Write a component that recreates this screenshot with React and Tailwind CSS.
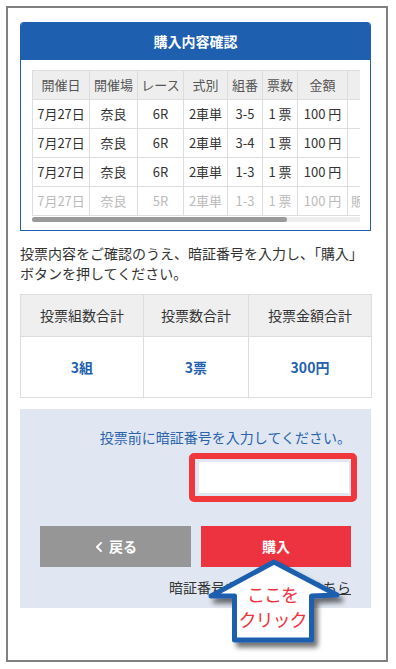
import React from "react";
import { FaChevronLeft } from "react-icons/fa";

const rows = [
  ["7月27日", "奈良", "6R", "2車単", "3-5", "1 票", "100 円", ""],
  ["7月27日", "奈良", "6R", "2車単", "3-4", "1 票", "100 円", ""],
  ["7月27日", "奈良", "6R", "2車単", "1-3", "1 票", "100 円", ""],
  ["7月27日", "奈良", "5R", "2車単", "1-3", "1 票", "100 円", "販売終了"],
];
const heads = ["開催日", "開催場", "レース", "式別", "組番", "票数", "金額", "状態"];
const widths = [57, 48, 46, 44, 35, 35, 50, 62];

export default function App() {
  return (
    <div className="relative w-[396px] h-[669px] bg-white font-['Noto_Sans_CJK_JP',sans-serif] overflow-hidden">
      <div className="ml-[6px] mt-[6px] w-[382px] h-[656px] border-2 border-[#808080] pl-[12px] pr-[15px] pt-[14px]">
        {/* card */}
        <div className="w-[351px] rounded-t-[4px] overflow-hidden border-b border-x border-[#1E5FAF]">
          <div className="h-[38px] -mx-px bg-[#1E5FAF] flex items-center justify-center text-white font-bold text-[14px]">
            購入内容確認
          </div>
          <div className="pl-[11px] pr-[10px] pt-[10px] pb-[8px]">
            <div className="w-[328px] overflow-hidden">
              <table className="border-collapse table-fixed text-[13px]" style={{ width: 377 }}>
                <colgroup>
                  {widths.map((w, i) => (
                    <col key={i} style={{ width: w }} />
                  ))}
                </colgroup>
                <thead>
                  <tr className="h-[29px] bg-[#eeeeee]">
                    {heads.map((h, i) => (
                      <th key={i} className="border border-[#dddddd] font-normal text-[#555] text-center p-0 whitespace-nowrap">
                        {i < 7 ? h : ""}
                      </th>
                    ))}
                  </tr>
                </thead>
                <tbody>
                  {rows.map((r, ri) => (
                    <tr key={ri} className={"h-[29px] " + (ri === 3 ? "text-[#bbbbbb]" : "text-[#333]")}>
                      {r.map((c, ci) => (
                        <td key={ci} className={"border border-[#dddddd] p-0 whitespace-nowrap " + (ci === 7 ? "text-left pl-[3px]" : "text-center")}>
                          {c}
                        </td>
                      ))}
                    </tr>
                  ))}
                </tbody>
              </table>
              <div className="mt-[1px] h-[5px] w-[328px] bg-[#eeeeee]">
                <div className="h-[5px] w-[255px] bg-[#9a9a9a] rounded-full" />
              </div>
            </div>
          </div>
        </div>

        <p className="mt-[12px] text-[14px] leading-[20px] text-[#333] w-[351px]">
          投票内容をご確認のうえ、暗証番号を入力し、「購入」ボタンを押してください。
        </p>

        <table className="mt-[11px] w-[351px] border-collapse table-fixed text-[14px]">
          <colgroup>
            <col style={{ width: 123 }} />
            <col style={{ width: 105 }} />
            <col style={{ width: 123 }} />
          </colgroup>
          <thead>
            <tr className="h-[42px] bg-[#efefef]">
              {["投票組数合計", "投票数合計", "投票金額合計"].map((h) => (
                <th key={h} className="border border-[#dddddd] font-normal text-[#333] text-center p-0">
                  {h}
                </th>
              ))}
            </tr>
          </thead>
          <tbody>
            <tr className="h-[61px]">
              {["3組", "3票", "300円"].map((v) => (
                <td key={v} className="border border-[#dddddd] font-bold text-[#2461AE] text-center p-0">
                  {v}
                </td>
              ))}
            </tr>
          </tbody>
        </table>

        <div className="mt-[11px] w-[351px] bg-[#E0E7F2] px-[20px] pt-[18px] pb-[11px]">
          <p className="text-right text-[14px] leading-[21px] text-[#2A63AC]">投票前に暗証番号を入力してください。</p>
          <div className="mt-[14px] flex justify-end">
            <div className="relative w-[150px] h-[31px] bg-white mr-[2px]">
              <div className="absolute top-[-9px] bottom-[-9px] left-[-10px] right-[-8px] border-[6px] border-[#F0373B] rounded-[5px]" />
            </div>
          </div>
          <div className="mt-[33px] flex gap-[10px]">
            <div className="w-[151px] h-[41px] bg-[#969696] flex items-center justify-center gap-[5px] text-white font-bold text-[14px]">
              <FaChevronLeft className="w-[10px] h-[12px]" />
              <span>戻る</span>
            </div>
            <div className="w-[150px] h-[41px] bg-[#EE3340] flex items-center justify-center text-white font-bold text-[14px]">
              購入
            </div>
          </div>
          <p className="mt-[10px] text-right text-[14px] leading-[20px] text-[#333]">
            暗証番号を忘れた方は<span className="underline">こちら</span>
          </p>
        </div>
      </div>

      {/* annotation arrow */}
      <svg className="absolute left-[200px] top-[552px]" width="160" height="110" viewBox="200 552 160 110">
        <defs>
          <filter id="sh" x="-20%" y="-20%" width="150%" height="150%">
            <feDropShadow dx="4" dy="5" stdDeviation="2.5" floodColor="#000" floodOpacity="0.55" />
          </filter>
        </defs>
        <path
          d="M274,562 L337,595 L311.5,596 L311.5,640 L234.5,640 L234.5,596 L211,596 Z"
          fill="#fff"
          stroke="#1E5FAF"
          strokeWidth="5"
          strokeLinejoin="round"
          filter="url(#sh)"
        />
      </svg>
      <div className="absolute left-[234px] top-[582px] w-[77px] text-center text-[18px] leading-[25px] text-[#EE3340] tracking-[-1px]">
        ここを
        <br />
        クリック
      </div>
    </div>
  );
}
